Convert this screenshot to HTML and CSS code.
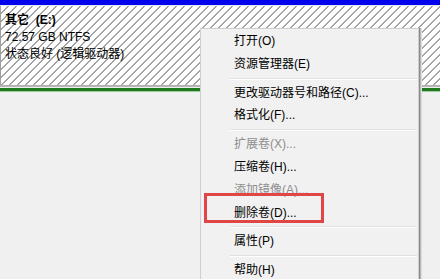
FILE: index.html
```html
<!DOCTYPE html>
<html>
<head>
<meta charset="utf-8">
<link rel="stylesheet" href="styles.css">
</head>
<body>
<div class="screen">
  <div class="topbar"></div>
  <div class="volume">
    <div class="vol-title">其它&nbsp;&nbsp;(E:)</div>
    <div class="vol-line">72.57 GB NTFS</div>
    <div class="vol-line">状态良好 (逻辑驱动器)</div>
  </div>
  <div class="vol-edge"></div>
  <div class="green-dark"></div>
  <div class="green-light"></div>

  <div class="menu">
    <div class="item">打开(O)</div>
    <div class="item">资源管理器(E)</div>
    <div class="sep"></div>
    <div class="item">更改驱动器号和路径(C)...</div>
    <div class="item">格式化(F)...</div>
    <div class="sep"></div>
    <div class="item disabled">扩展卷(X)...</div>
    <div class="item">压缩卷(H)...</div>
    <div class="item disabled">添加镜像(A)...</div>
    <div class="item marked">删除卷(D)...<span class="mark"></span></div>
    <div class="sep"></div>
    <div class="item">属性(P)</div>
    <div class="sep"></div>
    <div class="item">帮助(H)</div>
  </div>
</div>
</body>
</html>
```
FILE: styles.css
```css
html, body {
  margin: 0;
  padding: 0;
}
body {
  width: 440px;
  height: 279px;
  overflow: hidden;
  background: #f0f0f0;
  font-family: "Liberation Sans", "Noto Sans CJK SC", sans-serif;
  font-size: 12px;
  color: #000;
}
.screen {
  position: relative;
  width: 440px;
  height: 279px;
  overflow: hidden;
}
.topbar {
  height: 5px;
  background: #0000ec;
  border-bottom: 1px solid #e8e8e8;
}
.volume {
  height: 79px;
  box-sizing: border-box;
  border-left: 1px solid #a0a0a0;
  padding: 6px 0 0 4px;
  background-color: #ffffff;
  background-image: repeating-linear-gradient(135deg, #ffffff 0px, #ffffff 4.7px, #a4a4a4 4.7px, #a4a4a4 5.66px);
  line-height: 17px;
}
.vol-title {
  font-weight: bold;
}
.vol-line {
  font-weight: normal;
}
.vol-edge {
  height: 2px;
  background: #b4b4b4;
}
.green-dark {
  margin-top: 1px;
  height: 3px;
  background: #1f7a1f;
}
.green-light {
  height: 1px;
  background: #9ccf9c;
}
.menu {
  position: absolute;
  left: 200px;
  top: 28px;
  width: 219px;
  height: 270px;
  background: #f1f1f1;
  border: 1px solid #cfcfcf;
  box-shadow: 1px 0 0 #8a8a8a, 2px 0 0 #b8b8b8, 3px 0 0 #dcdcdc;
  padding-top: 1px;
  box-sizing: border-box;
}
.item {
  position: relative;
  height: 22.8px;
  line-height: 22.8px;
  padding-left: 33px;
  white-space: nowrap;
}
.item.disabled {
  color: #8d8d8d;
}
.sep {
  height: 1px;
  margin: 2px 1px 2px 29px;
  background: #e0e0e0;
  border-bottom: 1px solid #ffffff;
}
.mark {
  position: absolute;
  left: 3px;
  top: -9px;
  width: 114px;
  height: 24px;
  border: 3px solid #e04646;
}
```
